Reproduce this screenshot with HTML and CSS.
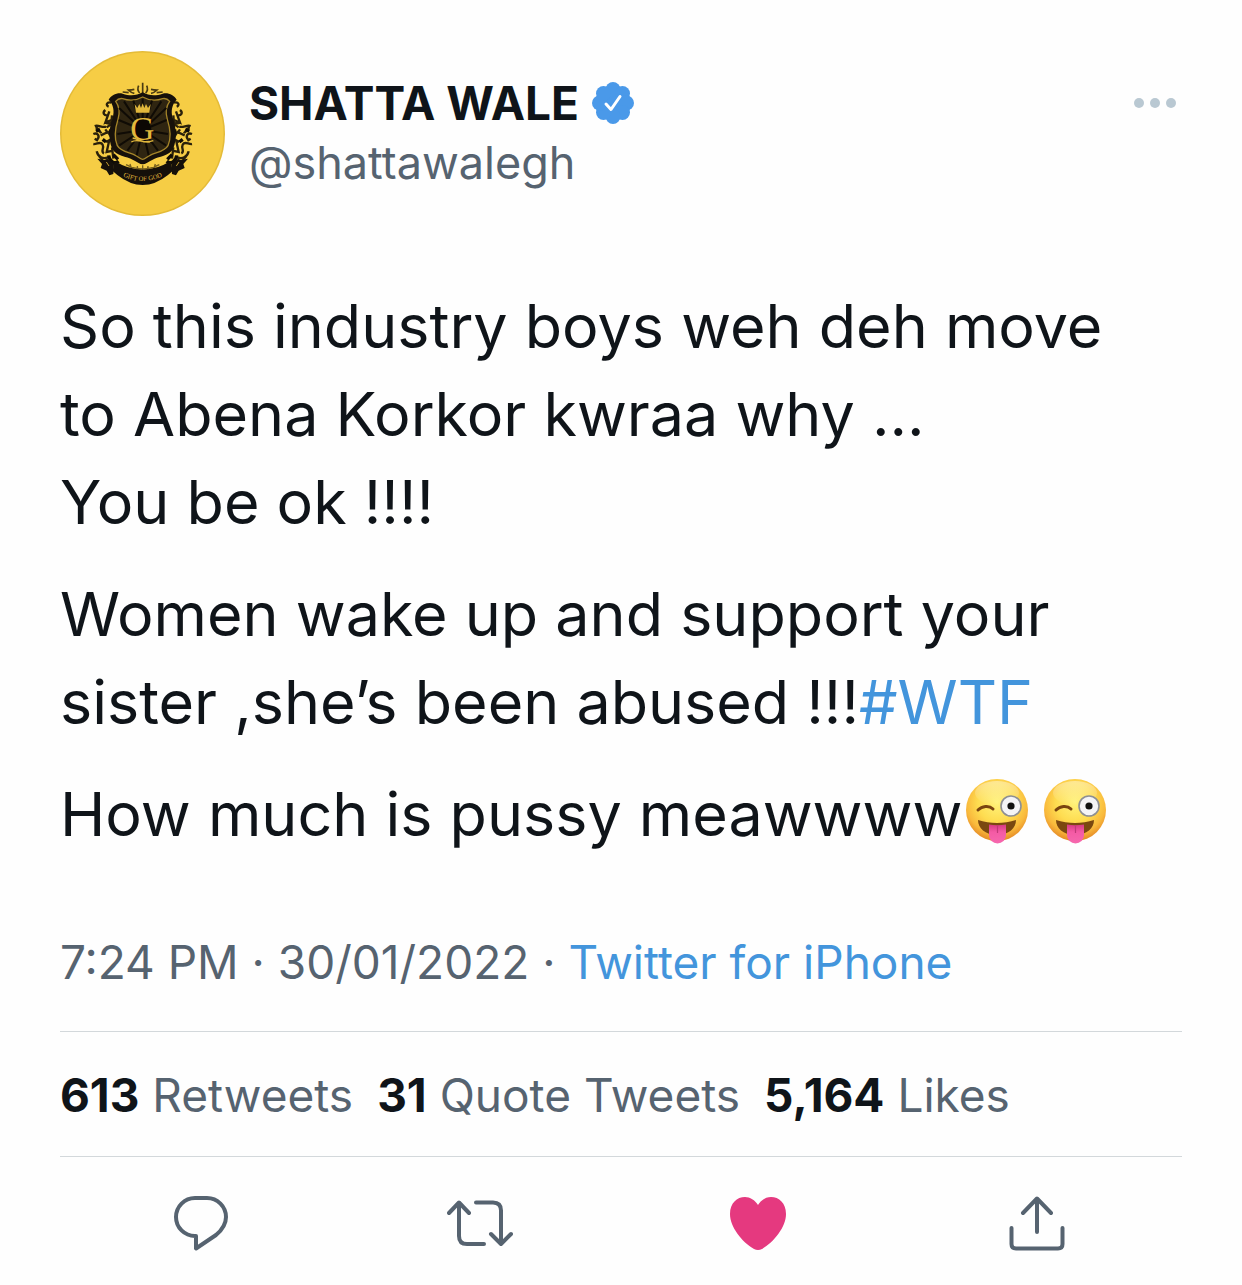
FILE: index.html
```html
<!DOCTYPE html>
<html lang="en">
<head>
  <meta charset="UTF-8">
  <meta name="viewport" content="width=device-width, initial-scale=1">
  <title>SHATTA WALE on Twitter</title>
  <link rel="stylesheet" href="styles.css">
</head>
<body>
  <!-- shared shapes -->
  <svg class="defs" aria-hidden="true">
    <defs>
      <radialGradient id="face" cx="50%" cy="38%" r="62%">
        <stop offset="0" stop-color="#fff27a"/>
        <stop offset="0.5" stop-color="#fedc50"/>
        <stop offset="0.8" stop-color="#f9b93c"/>
        <stop offset="1" stop-color="#e58a26"/>
      </radialGradient>
      <linearGradient id="shine" x1="0" y1="0" x2="0" y2="1">
        <stop offset="0" stop-color="#fff" stop-opacity="0.4"/>
        <stop offset="1" stop-color="#fff" stop-opacity="0"/>
      </linearGradient>
      <linearGradient id="tongue" x1="0" y1="0" x2="0" y2="1">
        <stop offset="0" stop-color="#d63b80"/>
        <stop offset="0.4" stop-color="#f45ba5"/>
        <stop offset="1" stop-color="#f668ae"/>
      </linearGradient>
      <symbol id="wink" viewBox="0 0 66 66">
        <circle cx="32" cy="32" r="31" fill="url(#face)"/>
        <ellipse cx="32" cy="15" rx="22" ry="12" fill="url(#shine)"/>
        <path d="M13 32c4-4 11-5 15-1" fill="none" stroke="#7a4510" stroke-width="3" stroke-linecap="round"/>
        <circle cx="46" cy="28" r="10" fill="#f4f4f6" stroke="#8d8f94" stroke-width="1.6"/>
        <circle cx="46" cy="28" r="3.6" fill="#111"/>
        <path d="M13 42c12 4 26 4 38 0 0 8-7 15-19 15S13 50 13 42z" fill="#7a4810"/>
        <path d="M24 46.500q8 1.500 17 0V57a8.500 8.500 0 0 1-17 0z" fill="url(#tongue)"/>
        <path d="M32.500 47v8" stroke="#c03a78" stroke-width="1.200"/>
      </symbol>
    </defs>
  </svg>

  <article class="tweet">
    <header class="author">
      <svg class="avatar" viewBox="30 33 495 495" role="img" aria-label="SHATTA WALE avatar">
        <circle cx="277.500" cy="280.500" r="247.500" fill="#e4bb38"/>
        <circle cx="277.500" cy="280.500" r="243" fill="#f6cd45"/>
        <!-- crown leaves on top -->
        <g fill="none" stroke="#4a3b12" stroke-width="5">
          <path d="M278 128v32M266 137q-6 12 3 22M290 137q6 12-3 22M253 148q-8 2-18 2 8 8 18 10M303 148q8 2 18 2-8 8-18 10M236 158l-18-2M320 158l18-2"/>
        </g>
        <!-- leaves, left side then mirrored -->
        <g id="leaves" fill="none" stroke="#2a210b" stroke-width="7">
          <path d="M184 188c-14-4-18 8-8 12M166 210c-10 8-4 18 8 16M178 214l-12 34 18-8M186 226l-2 24M164 246c8 6 18 6 22 0"/>
          <path d="M134 258c12-4 22 6 34 2M140 258c-4 12 10 14 14 22M170 262l14-10 6 18M130 282c14-6 20 8 12 16M152 286l22-10 12 20-18 10M130 312c10 2 22-10 28 2s-8 20 4 26M178 300l-8 36 20-4M186 322l4 34M140 334c4 18 20 24 34 18M134 296l10 6M166 268l8 12M148 350l10 10"/>
          <path d="M176 346c2 18 18 28 30 18M150 268l-12 6M158 298l10 8M182 268v16M190 344l14 14" stroke="#100c05" stroke-width="10"/>
        </g>
        <use href="#leaves" transform="matrix(-1 0 0 1 556 0)"/>
        <!-- shield -->
        <path d="M278 157c-18 10-38 12-60 4-16-4-34 4-42 18 14 14 18 34 12 54-10 28-14 60-2 92 12 24 44 24 62 34 12 6 22 14 30 14s18-8 30-14c18-10 50-10 62-34 12-32 8-64-2-92-6-20-2-40 12-54-8-14-26-22-42-18-22 8-42 6-60-4z" fill="#17110a"/>
        <path d="M278 171c-18 10-40 12-60 5-11-2-16 2-21 8 12 16 13 34 7 54-9 28-13 54-2 79 10 18 36 20 54 29 10 5 16 12 22 12s12-7 22-12c18-9 44-11 54-29 11-25 7-51-2-79-6-20-5-38 7-54-5-6-10-10-21-8-20 7-42 5-60-5z" fill="#2f2511" stroke="#a58529" stroke-width="4"/>
        <g stroke="#0f0b05" stroke-width="6">
          <path d="M278 270V176M278 270L250 182M278 270L222 184M278 270L207 204M278 270L206 240M278 270L202 282M278 270L208 316M278 270L232 332M278 270L260 346M278 270L306 182M278 270L334 184M278 270L349 204M278 270L350 240M278 270L354 282M278 270L348 316M278 270L324 332M278 270L296 346"/>
        </g>
        <path d="M254 192l8 12 6-12 5 12 5-14 5 14 5-12 6 12 8-12-4 26h-40z" fill="#e2b83c"/>
        <ellipse cx="276" cy="268" rx="28" ry="30" fill="#0c0804"/>
        <text class="crest-letter" x="277" y="300" text-anchor="middle">G</text>
        <path d="M244 306c20-14 36 8 66-4M248 294c18 2 30 16 52 12" fill="none" stroke="#e2b83c" stroke-width="4"/>
        <!-- ribbon -->
        <path d="M228 374q50 26 100 0M240 372l6 18M262 378l2 18M278 376v20M294 378l-2 18M316 372l-6 18" fill="none" stroke="#77601e" stroke-width="4"/>
        <path d="M142 356l22 4 8-4 20 16-2 30-12 4-8-14-18-8 4-12zM414 356l-22 4-8-4-20 16 2 30 12 4 8-14 18-8-4-12z" fill="#15100a"/>
        <path d="M194 363q84 52 168 0l6 30-14 12q-76 60-152 0l-14-12z" fill="#15100a"/>
        <path d="M169 366l8 12M387 366l-8 12" stroke="#c59e30" stroke-width="3"/>
        <path id="ribbon" d="M206 402q72 42 144 0" fill="none"/>
        <text class="crest-motto" text-anchor="middle"><textPath href="#ribbon" startOffset="50%">GIFT OF GOD</textPath></text>
      </svg>
      <div class="names">
        <h1 class="name">SHATTA WALE
          <svg class="badge" viewBox="0 0 42 42" role="img" aria-label="Verified account">
            <g fill="#4a99e9">
              <circle cx="21" cy="21" r="17"/>
              <circle cx="21" cy="7.500" r="7.500"/>
              <circle cx="30.500" cy="11.500" r="7.500"/>
              <circle cx="34.500" cy="21" r="7.500"/>
              <circle cx="30.500" cy="30.500" r="7.500"/>
              <circle cx="21" cy="34.500" r="7.500"/>
              <circle cx="11.500" cy="30.500" r="7.500"/>
              <circle cx="7.500" cy="21" r="7.500"/>
              <circle cx="11.500" cy="11.500" r="7.500"/>
            </g>
            <path d="M14 22l5 5.500 9-13" fill="none" stroke="#fff" stroke-width="3" stroke-linecap="round" stroke-linejoin="round"/>
          </svg>
        </h1>
        <a class="handle" href="#">@shattawalegh</a>
      </div>
      <button class="more" type="button" aria-label="More">
        <svg width="54" height="60" viewBox="0 0 54 60" fill="#b9c8d2">
          <circle cx="11" cy="30" r="5"/>
          <circle cx="27" cy="30" r="5"/>
          <circle cx="43" cy="30" r="5"/>
        </svg>
      </button>
    </header>

    <div class="text">
      <p>So this industry boys weh deh move<br>to Abena Korkor kwraa why ...<br>You be ok !!!!</p>
      <p>Women wake up and support your<br>sister ,she’s been abused !!!<a href="#">#WTF</a></p>
      <p>How much is pussy meawwww<svg class="emoji" role="img" aria-label="winking face with tongue"><use href="#wink"/></svg><svg class="emoji" role="img" aria-label="winking face with tongue"><use href="#wink"/></svg></p>
    </div>

    <p class="meta">7:24 PM · 30/01/2022 · <a href="#">Twitter for iPhone</a></p>

    <div class="stats">
      <a href="#"><strong>613</strong> Retweets</a>
      <a href="#"><strong>31</strong> Quote Tweets</a>
      <a href="#"><strong>5,164</strong> Likes</a>
    </div>

    <div class="actions">
      <button type="button" aria-label="Reply">
        <svg class="icon" viewBox="0 0 66 66">
          <path d="M28 46h-1C16.500 46 8 37.500 8 27S16.500 8 27 8h12c10.500 0 19 8.500 19 19 0 7-4 13-10 18L28 58.500z"/>
        </svg>
      </button>
      <button type="button" aria-label="Retweet">
        <svg class="icon" viewBox="0 0 66 66">
          <path d="M2 23l10-10.500L22 23M12 13v33q0 8 8 8h17M44 44l10 10 10-10M54 53V20.500q0-8-8-8H29"/>
        </svg>
      </button>
      <button type="button" aria-label="Unlike">
        <svg class="icon liked" viewBox="0 0 66 66">
          <path d="M33 15C36 10 41 7 46 7c8 0 15 6 15 17 0 13-12 28-24 35q-4 2-8 0C17 52 5 37 5 24 5 13 12 7 20 7c5 0 10 3 13 8z"/>
        </svg>
      </button>
      <button type="button" aria-label="Share">
        <svg class="icon" viewBox="0 0 66 66">
          <path d="M19 23L33 8.500 47 23M33 9v33M7.500 38v16q0 4.500 4.500 4.500h42q4.500 0 4.500-4.500V38"/>
        </svg>
      </button>
    </div>
  </article>
</body>
</html>
```
FILE: styles.css
```css
* { box-sizing: border-box; }

body {
  margin: 0;
  background: #fefefe;
  color: #0f1419;
  font-family: Inter, "Liberation Sans", sans-serif;
  font-size: 46px;
  line-height: 60px;
}

h1, p { margin: 0; font-size: inherit; }
a { color: #4395dc; text-decoration: none; }
button { padding: 0; border: 0; background: none; cursor: pointer; }
svg { display: block; }
.defs { position: absolute; width: 0; height: 0; }

.tweet { padding: 51px 60px 28px; }

.author { display: flex; align-items: center; gap: 24px; }
.avatar { flex: none; width: 165px; height: 165px; }
.crest-letter { font: 100px "Liberation Serif", serif; fill: #e2b83c; }
.crest-motto { font: 20px "Liberation Serif", serif; fill: #e2b83c; }
.names { flex: 1; padding-bottom: 2px; }
.name { display: flex; align-items: center; gap: 13px; font-weight: 700; }
.badge { width: 42px; height: 42px; }
.handle { display: block; color: #566370; font-size: 45px; }
.more { align-self: flex-start; margin-top: 22px; }

.text {
  margin-top: 66px;
  font-size: 61px;
  line-height: 88px;
}
.text p + p { margin-top: 24px; }
.emoji {
  display: inline-block;
  width: 66px;
  height: 66px;
  margin: 0 9px 0 3px;
  vertical-align: -8px;
}

.meta { margin-top: 74px; color: #566370; }

.stats {
  display: flex;
  gap: 24px;
  margin-top: 39px;
  padding: 33px 0 31px;
  border-top: 1px solid #d3d8db;
  border-bottom: 1px solid #d3d8db;
}
.stats a { color: #566370; }
.stats strong { color: #0f1419; font-weight: 700; }

.actions {
  display: grid;
  grid-template-columns: repeat(4, 1fr);
  padding: 33px 6px 0 2px;
}
.actions button { display: flex; justify-content: center; }
.icon {
  width: 66px;
  height: 66px;
  fill: none;
  stroke: #566370;
  stroke-width: 4;
  stroke-linecap: round;
  stroke-linejoin: round;
}
.liked { fill: #e5397f; stroke: none; }
```
